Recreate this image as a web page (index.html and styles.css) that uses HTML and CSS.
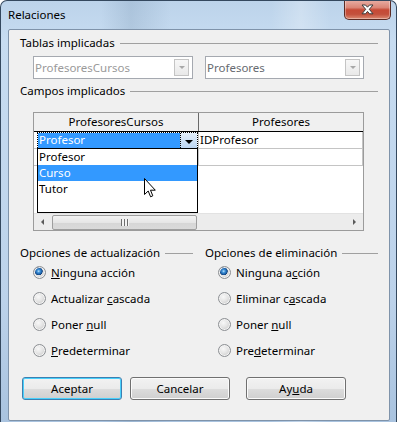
FILE: index.html
```html
<!DOCTYPE html>
<html lang="es">
<head>
    <meta charset="UTF-8">
    <meta name="viewport" content="width=device-width, initial-scale=1.0">
    <title>Relaciones</title>
    <link rel="stylesheet" href="styles.css">
</head>
<body>
    <div class="window">
        <div class="titlebar">
            <span class="title">Relaciones</span>
            <button class="close-btn" aria-label="Cerrar">
                <svg width="13" height="11" viewBox="0 0 13 11">
                    <path d="M1 1 H4.5 L6.5 3.2 L8.5 1 H12 L8.3 5.3 L12 9.8 H8.5 L6.5 7.4 L4.5 9.8 H1 L4.7 5.3 Z" fill="#fff" stroke="#3a3a3a" stroke-width="1"/>
                </svg>
            </button>
        </div>

        <div class="client">
            <div class="fixed-line first">Tablas implicadas</div>
            <div class="tables-row">
                <div class="combo combo-left">
                    <span class="combo-text dim">ProfesoresCursos</span>
                    <span class="combo-btn"></span>
                </div>
                <div class="combo combo-right">
                    <span class="combo-text">Profesores</span>
                    <span class="combo-btn"></span>
                </div>
            </div>

            <div class="fixed-line campos">Campos implicados</div>
            <div class="grid">
                <div class="grid-head">
                    <div class="hcell col1">ProfesoresCursos</div>
                    <div class="hcell col2">Profesores</div>
                </div>
                <div class="grid-body">
                    <div class="grow">
                        <div class="gcell col1">
                            <div class="cell-combo">
                                <span class="edit">Profesor</span>
                                <span class="drop-btn"></span>
                            </div>
                        </div>
                        <div class="gcell col2">IDProfesor</div>
                    </div>
                    <div class="grow">
                        <div class="gcell col1"></div>
                        <div class="gcell col2"></div>
                    </div>
                </div>
                <div class="hscroll">
                    <span class="arrow-left"></span>
                    <span class="thumb"><span class="grip"></span></span>
                    <span class="arrow-right"></span>
                </div>

                <!-- lista desplegable abierta -->
                <ul class="dropdown">
                    <li>Profesor</li>
                    <li class="hot">Curso</li>
                    <li>Tutor</li>
                </ul>
                <svg class="cursor" width="12" height="20" viewBox="0 0 12 20">
                    <path d="M0.5 0.5 V16.5 L4.2 13 L6.6 18.8 L8.8 17.8 L6.5 12.2 H11.3 Z" fill="#fff" stroke="#000" stroke-width="1"/>
                </svg>
            </div>

            <div class="options">
                <div class="opt-col">
                    <div class="fixed-line opt-title">Opciones de actualización</div>
                    <div class="radio checked"><span class="dot"></span><span><u>N</u>inguna acción</span></div>
                    <div class="radio"><span class="dot"></span><span>Actualizar <u>c</u>ascada</span></div>
                    <div class="radio"><span class="dot"></span><span>Poner <u>n</u>ull</span></div>
                    <div class="radio"><span class="dot"></span><span><u>P</u>redeterminar</span></div>
                </div>
                <div class="opt-col">
                    <div class="fixed-line opt-title">Opciones de eliminación</div>
                    <div class="radio checked"><span class="dot"></span><span>Ninguna a<u>c</u>ción</span></div>
                    <div class="radio"><span class="dot"></span><span>Eliminar c<u>a</u>scada</span></div>
                    <div class="radio"><span class="dot"></span><span>Poner <u>n</u>ull</span></div>
                    <div class="radio"><span class="dot"></span><span>Pre<u>d</u>eterminar</span></div>
                </div>
            </div>

            <div class="buttons">
                <button class="btn default">Aceptar</button>
                <button class="btn cancel">Cancelar</button>
                <button class="btn help">Ay<u>u</u>da</button>
            </div>
        </div>
    </div>
</body>
</html>
```

FILE: styles.css
```css
* {
    box-sizing: border-box;
}
body {
    margin: 0;
    background: #fff;
    font-family: "Noto Sans", "DejaVu Sans", sans-serif;
    font-size: 11.5px;
    color: #000;
}
.window {
    width: 397px;
    height: 422px;
    border: 1px solid #34485e;
    border-bottom: none;
    border-radius: 7px 7px 0 0;
    padding: 0 6px 0 7px;
    background:
        linear-gradient(90deg, transparent 0, transparent 100px, rgba(90,120,150,0.18) 130px, transparent 170px, transparent 270px, rgba(255,255,255,0.25) 300px, transparent 330px),
        linear-gradient(180deg, #bcd3ea 0, #c7dcf1 40px, #bcd2ea 300px, #a9c3df 100%);
    overflow: hidden;
}
.titlebar {
    height: 28px;
    display: flex;
    justify-content: space-between;
    align-items: flex-start;
}
.title {
    margin-top: 7px;
    font-size: 11.5px;
    line-height: 14px;
    color: #000;
}
.close-btn {
    width: 47px;
    height: 20px;
    margin: -1px -1px 0 0;
    padding: 0;
    border: 1px solid #5b2b24;
    border-top: none;
    border-radius: 0 0 5px 5px;
    background: linear-gradient(180deg, #e9b0a6 0, #db8576 40%, #c64a36 52%, #c3503c 75%, #dc8a72 100%);
    box-shadow: inset 0 0 0 1px rgba(255,255,255,0.35);
    display: flex;
    align-items: center;
    justify-content: center;
}
.client {
    height: 392px;
    background: #f0f0f0;
    border: 1px solid #7f93aa;
    border-radius: 2px;
    padding: 0 11px;
}

/* lineas de grupo */
.fixed-line {
    display: flex;
    align-items: center;
    height: 14px;
    line-height: 14px;
    white-space: nowrap;
}
.fixed-line::after {
    content: "";
    flex: 1;
    height: 1px;
    margin-left: 5px;
    background: #a0a0a0;
}
.fixed-line.first {
    margin-top: 6px;
}
.fixed-line.campos {
    margin-top: 5px;
}

.tables-row {
    display: flex;
    margin: 6px 0 0 13px;
    gap: 12px;
}
.combo {
    height: 23px;
    border: 1px solid #a5a9b0;
    background: #fff;
    display: flex;
    align-items: center;
    padding-left: 1px;
}
.combo-left {
    width: 160px;
}
.combo-right {
    width: 159px;
}
.combo-text {
    flex: 1;
    color: #666a70;
}
.combo-text.dim {
    color: #9a9a9a;
}
.combo-btn {
    width: 15px;
    height: 17px;
    margin-right: 3px;
    border: 1px solid #c4c4c4;
    background: linear-gradient(180deg, #f7f7f7, #e9e9e9);
    display: flex;
    align-items: center;
    justify-content: center;
}
.combo-btn::after {
    content: "";
    border-left: 3px solid transparent;
    border-right: 3px solid transparent;
    border-top: 3px solid #a8a8a8;
}

/* rejilla */
.grid {
    position: relative;
    width: 331px;
    height: 119px;
    margin: 14px 0 0 13px;
    border: 1px solid #9b9b9b;
    background: #fff;
}
.grid-head {
    display: flex;
    height: 19px;
    background: #f0f0f0;
    border-bottom: 1px solid #000;
}
.hcell {
    text-align: center;
    line-height: 18px;
}
.col1 {
    width: 165px;
    border-right: 1px solid #6a6a6a;
}
.col2 {
    width: 164px;
}
.grid-body {
    height: 81px;
}
.grow {
    display: flex;
    height: 17px;
}
.gcell {
    height: 17px;
    line-height: 16px;
    border-bottom: 1px solid #c4c4c4;
}
.gcell.col1 {
    border-right: 1px solid #c4c4c4;
}
.gcell.col2 {
    border-right: 1px solid #c4c4c4;
    padding-left: 1px;
}
.cell-combo {
    display: flex;
    height: 16px;
    margin-left: 3px;
    border: 1px dotted #000;
    border-bottom: none;
}
.edit {
    flex: 1;
    background: #3399ff;
    color: #fff;
    line-height: 14px;
    padding-left: 1px;
}
.drop-btn {
    width: 17px;
    background: linear-gradient(180deg, #e3eefa, #bcd6f2);
    border-left: 1px dotted #000;
    display: flex;
    align-items: center;
    justify-content: center;
}
.drop-btn::after {
    content: "";
    border-left: 4px solid transparent;
    border-right: 4px solid transparent;
    border-top: 4px solid #000;
    margin-top: 2px;
}
.hscroll {
    display: flex;
    align-items: center;
    height: 17px;
    background: #ececec;
    border-top: 1px solid #e2e2e2;
}
.arrow-left {
    width: 17px;
    display: flex;
    justify-content: center;
}
.arrow-left::after {
    content: "";
    border-top: 3px solid transparent;
    border-bottom: 3px solid transparent;
    border-right: 3px solid #5a5a5a;
}
.thumb {
    width: 145px;
    height: 15px;
    margin-left: 1px;
    border: 1px solid #9e9e9e;
    border-radius: 2px;
    background: linear-gradient(180deg, #f3f3f3 0, #e6e6e6 50%, #d6d6d6 51%, #dadada 100%);
    display: flex;
    align-items: center;
    justify-content: center;
}
.grip {
    width: 8px;
    height: 7px;
    background: repeating-linear-gradient(90deg, #6f6f6f 0, #6f6f6f 1px, #f4f4f4 1px, #f4f4f4 3px);
}
.arrow-right {
    margin-left: auto;
    width: 17px;
    display: flex;
    justify-content: center;
}
.arrow-right::after {
    content: "";
    border-top: 3px solid transparent;
    border-bottom: 3px solid transparent;
    border-left: 3px solid #5a5a5a;
}
.dropdown {
    position: absolute;
    left: 3px;
    top: 35px;
    width: 161px;
    height: 65px;
    margin: 0;
    padding: 0;
    list-style: none;
    background: #fff;
    border: 1px solid #000;
}
.dropdown li {
    height: 16px;
    line-height: 16px;
    padding-left: 1px;
}
.dropdown li.hot {
    background: #3399ff;
    color: #fff;
}
.cursor {
    position: absolute;
    left: 110px;
    top: 65px;
}

/* opciones */
.options {
    display: flex;
    gap: 12px;
    margin-top: 16px;
}
.opt-col {
    flex: 1;
}
.opt-title {
    height: 12px;
    line-height: 12px;
}
.radio {
    display: flex;
    align-items: center;
    gap: 5px;
    height: 26px;
    padding-left: 13px;
}
.dot {
    width: 13px;
    height: 13px;
    border-radius: 50%;
    border: 1px solid #8c8f93;
    background: radial-gradient(circle at 40% 35%, #f8f8f8 0, #e4e4e4 45%, #cdcdcd 75%, #e9e9e9 100%);
    box-shadow: inset 0 0 0 1px #f4f4f4;
}
.radio.checked .dot {
    background:
        radial-gradient(circle at 42% 38%, #bfe3fb 0, #3f93da 1.5px, #1a5ca3 3.2px, #123f78 3.8px, transparent 4.3px),
        radial-gradient(circle at 40% 35%, #f8f8f8 0, #e4e4e4 45%, #cdcdcd 75%, #e9e9e9 100%);
}

/* botones */
.buttons {
    display: flex;
    margin: 14px 0 0 2px;
}
.btn {
    width: 100px;
    height: 23px;
    padding: 0;
    font-family: inherit;
    font-size: 11.5px;
    color: #000;
    border: 1px solid #707070;
    border-radius: 3px;
    background: linear-gradient(180deg, #f2f2f2 0, #ebebeb 50%, #dddddd 51%, #cfcfcf 100%);
    box-shadow: inset 0 0 0 1px #fbfbfb;
}
.btn.default {
    border-color: #3c7fb1;
    box-shadow: inset 0 0 0 1px #48d0fb;
}
.btn.cancel {
    margin-left: 8px;
}
.btn.help {
    margin-left: 16px;
}
```
